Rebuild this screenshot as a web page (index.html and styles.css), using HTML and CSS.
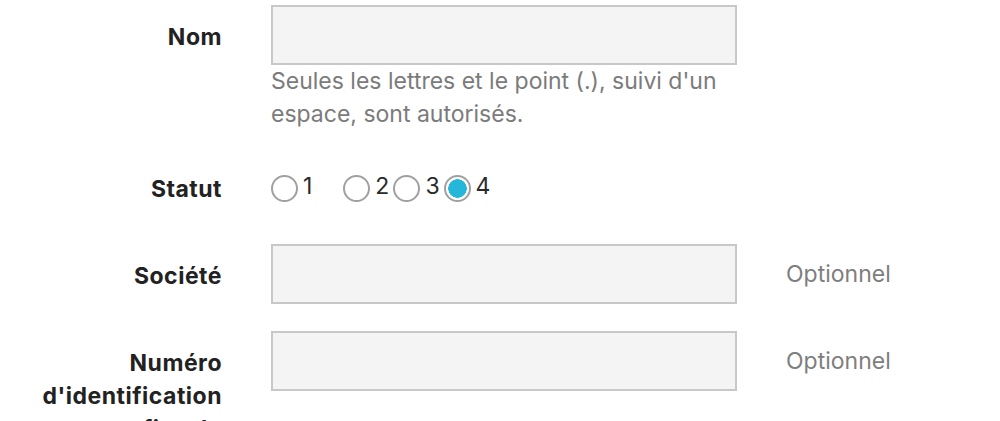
FILE: index.html
```html
<!DOCTYPE html>
<html lang="fr">
<head>
<meta charset="utf-8">
<title>Formulaire</title>
<link rel="stylesheet" href="styles.css">
</head>
<body>
<form class="form">
  <div class="row row-nom">
    <label class="label" for="nom">Nom</label>
    <div class="field">
      <input class="input" id="nom" type="text">
      <p class="help">Seules les lettres et le point (.), suivi d'un espace, sont autorisés.</p>
    </div>
  </div>
  <div class="row row-statut">
    <span class="label">Statut</span>
    <div class="radios">
      <label class="radio radio-first"><input type="radio" name="statut" value="1"><span>1</span></label>
      <label class="radio"><input type="radio" name="statut" value="2"><span>2</span></label>
      <label class="radio"><input type="radio" name="statut" value="3"><span>3</span></label>
      <label class="radio"><input type="radio" name="statut" value="4" checked><span>4</span></label>
    </div>
  </div>
  <div class="row row-societe">
    <label class="label" for="societe">Société</label>
    <div class="field"><input class="input" id="societe" type="text"></div>
    <span class="optional">Optionnel</span>
  </div>
  <div class="row row-numero">
    <label class="label" for="numero">Numéro d'identification fiscale</label>
    <div class="field"><input class="input" id="numero" type="text"></div>
    <span class="optional">Optionnel</span>
  </div>
</form>
</body>
</html>
```
FILE: styles.css
```css
html, body {
  margin: 0;
  padding: 0;
  background: #ffffff;
}
body {
  font-family: Inter, "Noto Sans", "Liberation Sans", sans-serif;
  font-size: 23px;
  line-height: 33px;
  color: #222222;
  overflow: hidden;
}
.form {
  padding-top: 5px;
}
.row {
  display: grid;
  grid-template-columns: 222px 466px auto;
  column-gap: 49px;
  align-items: start;
}
.label {
  font-weight: 700;
  letter-spacing: 0.5px;
  text-align: right;
  padding-top: 16px;
  color: #222222;
}
.field {
  display: flex;
  flex-direction: column;
}
.input {
  box-sizing: border-box;
  width: 466px;
  height: 60px;
  margin: 0;
  background: #f4f4f4;
  border: 2px solid #c8c8c8;
  border-radius: 0;
  font: inherit;
  padding: 0 12px;
}
.help {
  margin: 0;
  color: #7b7b7b;
  padding-right: 10px;
}
.optional {
  color: #7e7e7e;
  padding-top: 14px;
}
.row-nom {
  margin-bottom: 40px;
}
.row-statut {
  margin-bottom: 38px;
}
.row-statut .label {
  padding-top: 2px;
}
.row-societe {
  margin-bottom: 27px;
}
.radios {
  display: flex;
  align-items: center;
  padding-top: 4px;
}
.radio {
  display: flex;
  align-items: flex-start;
  gap: 5px;
  margin-right: 4px;
  color: #2a2a2a;
  line-height: 22px;
}
.radio-first {
  margin-right: 31px;
}
.radio input {
  appearance: none;
  -webkit-appearance: none;
  box-sizing: border-box;
  width: 27px;
  height: 27px;
  margin: 0;
  border: 2px solid #a0a0a0;
  border-radius: 50%;
  background: #ffffff;
}
.radio input:checked {
  background: radial-gradient(circle, #25b7d9 0 9px, #ffffff 9.5px);
}
```
